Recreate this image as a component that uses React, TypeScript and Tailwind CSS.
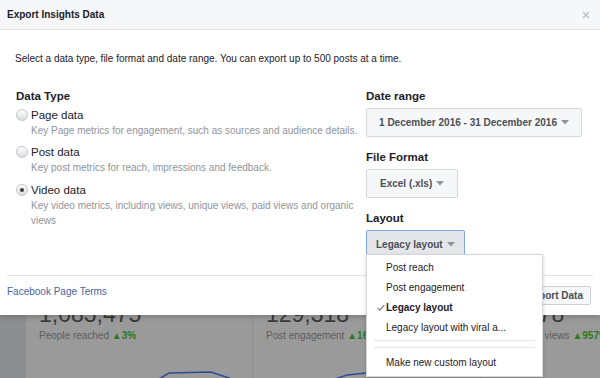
import React from "react";

const font = "font-['Liberation_Sans',Arial,Helvetica,sans-serif]";

function Radio({ checked }: { checked?: boolean }) {
  return (
    <span className="mt-[1px] flex h-[12px] w-[12px] shrink-0 items-center justify-center rounded-full border border-[#c4c6ca] bg-gradient-to-b from-[#ffffff] to-[#d9dbde]">
      {checked && <span className="h-[4px] w-[4px] rounded-full bg-[#3c3c3c]" />}
    </span>
  );
}

function Caret() {
  return (
    <svg width="8" height="5" viewBox="0 0 8 5" className="ml-[4px] inline-block shrink-0">
      <path d="M0 0h8L4 4.5z" fill="#8d949e" />
    </svg>
  );
}

function Option({ label, desc, checked }: { label: string; desc: React.ReactNode; checked?: boolean }) {
  return (
    <div className="flex gap-[3px]">
      <Radio checked={checked} />
      <div>
        <div className="text-[11.5px] leading-[15px] text-[#1d2129]">{label}</div>
        <div className="text-[10px] leading-[15px] text-[#90949c]">{desc}</div>
      </div>
    </div>
  );
}

function DropButton({ children, active, full }: { children: React.ReactNode; active?: boolean; full?: boolean }) {
  const base = "flex h-[29px] items-center whitespace-nowrap rounded-[2px] border text-[10px] font-bold text-[#4b4f56]";
  return (
    <button
      className={
        active
          ? `${base} border-[#7fa7e8] bg-[#e4e6ea] px-[9px]`
          : full
          ? `${base} w-full justify-center border-[#d5d7db] bg-[#f6f7f9] px-[13px]`
          : `${base} border-[#d5d7db] bg-[#f6f7f9] px-[13px]`
      }
    >
      {children}
      <Caret />
    </button>
  );
}

function LayoutMenu() {
  const items = ["Post reach", "Post engagement", "Legacy layout", "Legacy layout with viral a..."];
  return (
    <div className="absolute left-[0px] top-[24px] z-20 w-[177px] border border-[#d3d6db] bg-white pt-[2px] shadow-[0_2px_4px_rgba(0,0,0,0.18)]">
      {items.map((it) => (
        <div key={it} className="relative flex h-[20px] items-center pl-[19px] text-[10px] text-[#1d2129]">
          {it === "Legacy layout" && (
            <svg width="8" height="7" viewBox="0 0 8 7" className="absolute left-[10px] top-[7px]">
              <path d="M0.6 3.8 L2.8 6 L7.4 0.8" stroke="#7f8389" strokeWidth="1.2" fill="none" />
            </svg>
          )}
          <span className={it === "Legacy layout" ? "font-bold" : ""}>{it}</span>
        </div>
      ))}
      <div className="mx-[7px] mt-[3px] h-px bg-[#e5e6e9]" />
      <div className="mx-[7px] mt-[6px] h-px bg-[#e5e6e9]" />
      <div className="flex h-[28px] items-center pl-[19px] text-[10px] text-[#1d2129]">Make new custom layout</div>
    </div>
  );
}

function Stat({ value, label, change, line }: { value: string; label: string; change: string; line?: string }) {
  return (
    <div className="min-w-0 flex-1 overflow-hidden border-l border-[#8e8e8e] px-[13px]">
      <div className="-mt-[12.5px] whitespace-nowrap text-[23px] leading-[23px] text-[#3a3a3a]">{value}</div>
      <div className="mt-[4px] whitespace-nowrap text-[10px] leading-[12px] text-[#5e5e5e]">
        {label} <span className="font-bold text-[#2c7a1c]">▲{change}</span>
      </div>
      {line && (
        <svg width="200" height="40" viewBox="0 0 200 40" className="block">
          <polyline points={line} fill="none" stroke="#2f4c8f" strokeWidth="1.5" />
        </svg>
      )}
    </div>
  );
}

export default function App() {
  return (
    <div className={`${font} relative h-[378px] w-[600px] overflow-hidden bg-[#9a9a9a]`}>
      <div className="relative z-10 h-[315px] bg-white shadow-[0_2px_5px_rgba(0,0,0,0.2)]">
        <div className="flex h-[30px] items-center justify-between border-b border-[#e5e5e5] bg-[#f6f7f9] pl-[7px] pr-[10px]">
          <span className="text-[10px] font-bold text-[#1d2129]">Export Insights Data</span>
          <svg width="8" height="8" viewBox="0 0 8 8">
            <path d="M1 1L7 7M7 1L1 7" stroke="#bec2c9" strokeWidth="1.6" />
          </svg>
        </div>

        <div className="h-[245px] px-[15px] pt-[23px]">
          <p className="text-[10px] leading-[12px] text-[#1d2129]">
            Select a data type, file format and date range. You can export up to 500 posts at a time.
          </p>
          <div className="mt-[24.5px] flex pl-[1px] pr-[3px]">
            <div className="flex-1">
              <h3 className="text-[11.5px] font-bold leading-[13px] text-[#1d2129]">Data Type</h3>
              <div className="mt-[5px] flex flex-col gap-[7.5px]">
                <Option label="Page data" desc="Key Page metrics for engagement, such as sources and audience details." />
                <Option label="Post data" desc="Key post metrics for reach, impressions and feedback." />
                <Option
                  checked
                  label="Video data"
                  desc={<>Key video metrics, including views, unique views, paid views and organic<br />views</>}
                />
              </div>
            </div>
            <div className="w-[216px] shrink-0">
              <h3 className="text-[11.5px] font-bold leading-[13px] text-[#1d2129]">Date range</h3>
              <div className="mt-[5.5px] flex">
                <DropButton full>1 December 2016 - 31 December 2016</DropButton>
              </div>
              <h3 className="mt-[13.5px] text-[11.5px] font-bold leading-[13px] text-[#1d2129]">File Format</h3>
              <div className="mt-[5.5px] flex">
                <DropButton>Excel (.xls)</DropButton>
              </div>
              <h3 className="mt-[13.5px] text-[11.5px] font-bold leading-[13px] text-[#1d2129]">Layout</h3>
              <div className="relative mt-[5.5px] flex">
                <DropButton active>Legacy layout</DropButton>
                <LayoutMenu />
              </div>
            </div>
          </div>
        </div>

        <div className="mx-[7px] h-px bg-[#e5e5e5]" />
        <div className="flex items-start justify-between pl-[7px] pr-[9px] pt-[10px]">
          <a className="text-[10px] leading-[12px] text-[#4a64a0]">Facebook Page Terms</a>
          <button className="flex h-[19px] items-center rounded-[2px] border border-[#ced0d4] bg-[#f6f7f9] px-[7px] text-[10px] font-bold text-[#4b4f56]">
            Export Data
          </button>
        </div>
      </div>

      <div className="flex h-[63px] overflow-hidden">
        <div className="w-[25px] shrink-0 bg-[#8d8e90]" />
        <div className="flex w-[227px] shrink-0 bg-[#9a9a9a]">
          <Stat value="1,083,475" label="People reached" change="3%" line="115,40 130,31 172,30 190,36 198,40" />
        </div>
        <div className="flex w-[228px] shrink-0 bg-[#9a9a9a]">
          <Stat value="129,318" label="Post engagement" change="16%" line="60,40 81,33 120,29 160,28 200,27" />
        </div>
        <div className="flex min-w-0 flex-1 bg-[#9a9a9a]">
          <Stat value="13,478" label="Total video views" change="957%" />
        </div>
      </div>
    </div>
  );
}
